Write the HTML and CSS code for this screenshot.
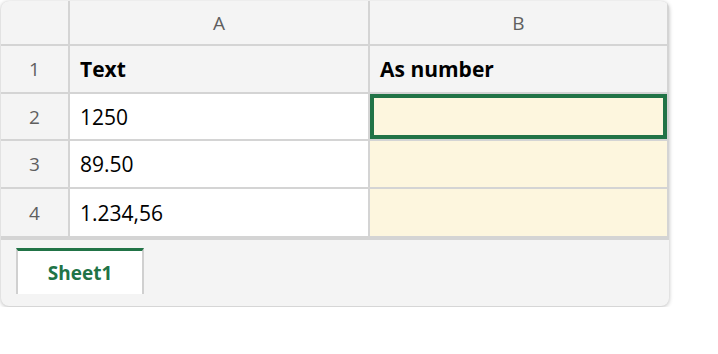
FILE: index.html
```html
<!DOCTYPE html>
<html lang="en">
<head>
  <meta charset="UTF-8">
  <meta name="viewport" content="width=device-width, initial-scale=1.0">
  <title>Sheet</title>
  <link rel="stylesheet" href="styles.css">
</head>
<body>

  <div class="workbook">
    <!-- Rejilla de celdas -->
    <div class="grid">
      <div class="corner"></div>
      <div class="col-head">A</div>
      <div class="col-head">B</div>

      <div class="row-head">1</div>
      <div class="cell header">Text</div>
      <div class="cell header">As number</div>

      <div class="row-head">2</div>
      <div class="cell">1250</div>
      <div class="cell result selected"></div>

      <div class="row-head">3</div>
      <div class="cell">89.50</div>
      <div class="cell result"></div>

      <div class="row-head">4</div>
      <div class="cell">1.234,56</div>
      <div class="cell result"></div>
    </div>

    <!-- Pestañas de hojas -->
    <div class="tabs">
      <div class="tab active">Sheet1</div>
    </div>
  </div>

</body>
</html>
```

FILE: styles.css
```css
/* Estilos generales */
body {
  font-family: "Segoe UI", "Open Sans", sans-serif;
  background-color: #ffffff;
  margin: 0;
  padding: 1px;
}

.workbook {
  width: 668px;
  background-color: #f4f4f4;
  border-radius: 8px;
  overflow: hidden;
  box-shadow: 0 1px 4px rgba(0, 0, 0, 0.28);
}

/* Rejilla */
.grid {
  display: grid;
  grid-template-columns: 67px 298px 297px;
  grid-template-rows: 43px 46px 45px 46px 47px;
  gap: 2px;
  background-color: #d4d4d4;
  border-right: 2px solid #d4d4d4;
  border-bottom: 4px solid #d4d4d4;
}

.corner,
.col-head,
.row-head {
  background-color: #f4f4f4;
  color: #5f5f5f;
  font-size: 19px;
  display: flex;
  align-items: center;
  justify-content: center;
}

.cell {
  background-color: #ffffff;
  color: #000;
  font-size: 21px;
  padding: 0 10px;
  display: flex;
  align-items: center;
}

.cell.header {
  background-color: #f4f4f4;
  font-weight: bold;
}

.cell.result {
  background-color: #fdf6de;
}

.cell.selected {
  box-shadow: inset 0 0 0 4px #217346;
}

/* Pestañas */
.tabs {
  height: 66px;
  padding: 8px 15px 0;
  box-sizing: border-box;
  display: flex;
  align-items: flex-start;
}

.tab {
  width: 124px;
  height: 43px;
  background-color: #ffffff;
  border-top: 3px solid #217346;
  border-left: 2px solid #d0d0d0;
  border-right: 2px solid #d0d0d0;
  color: #217346;
  font-size: 19px;
  font-weight: bold;
  display: flex;
  align-items: center;
  justify-content: center;
}
```
